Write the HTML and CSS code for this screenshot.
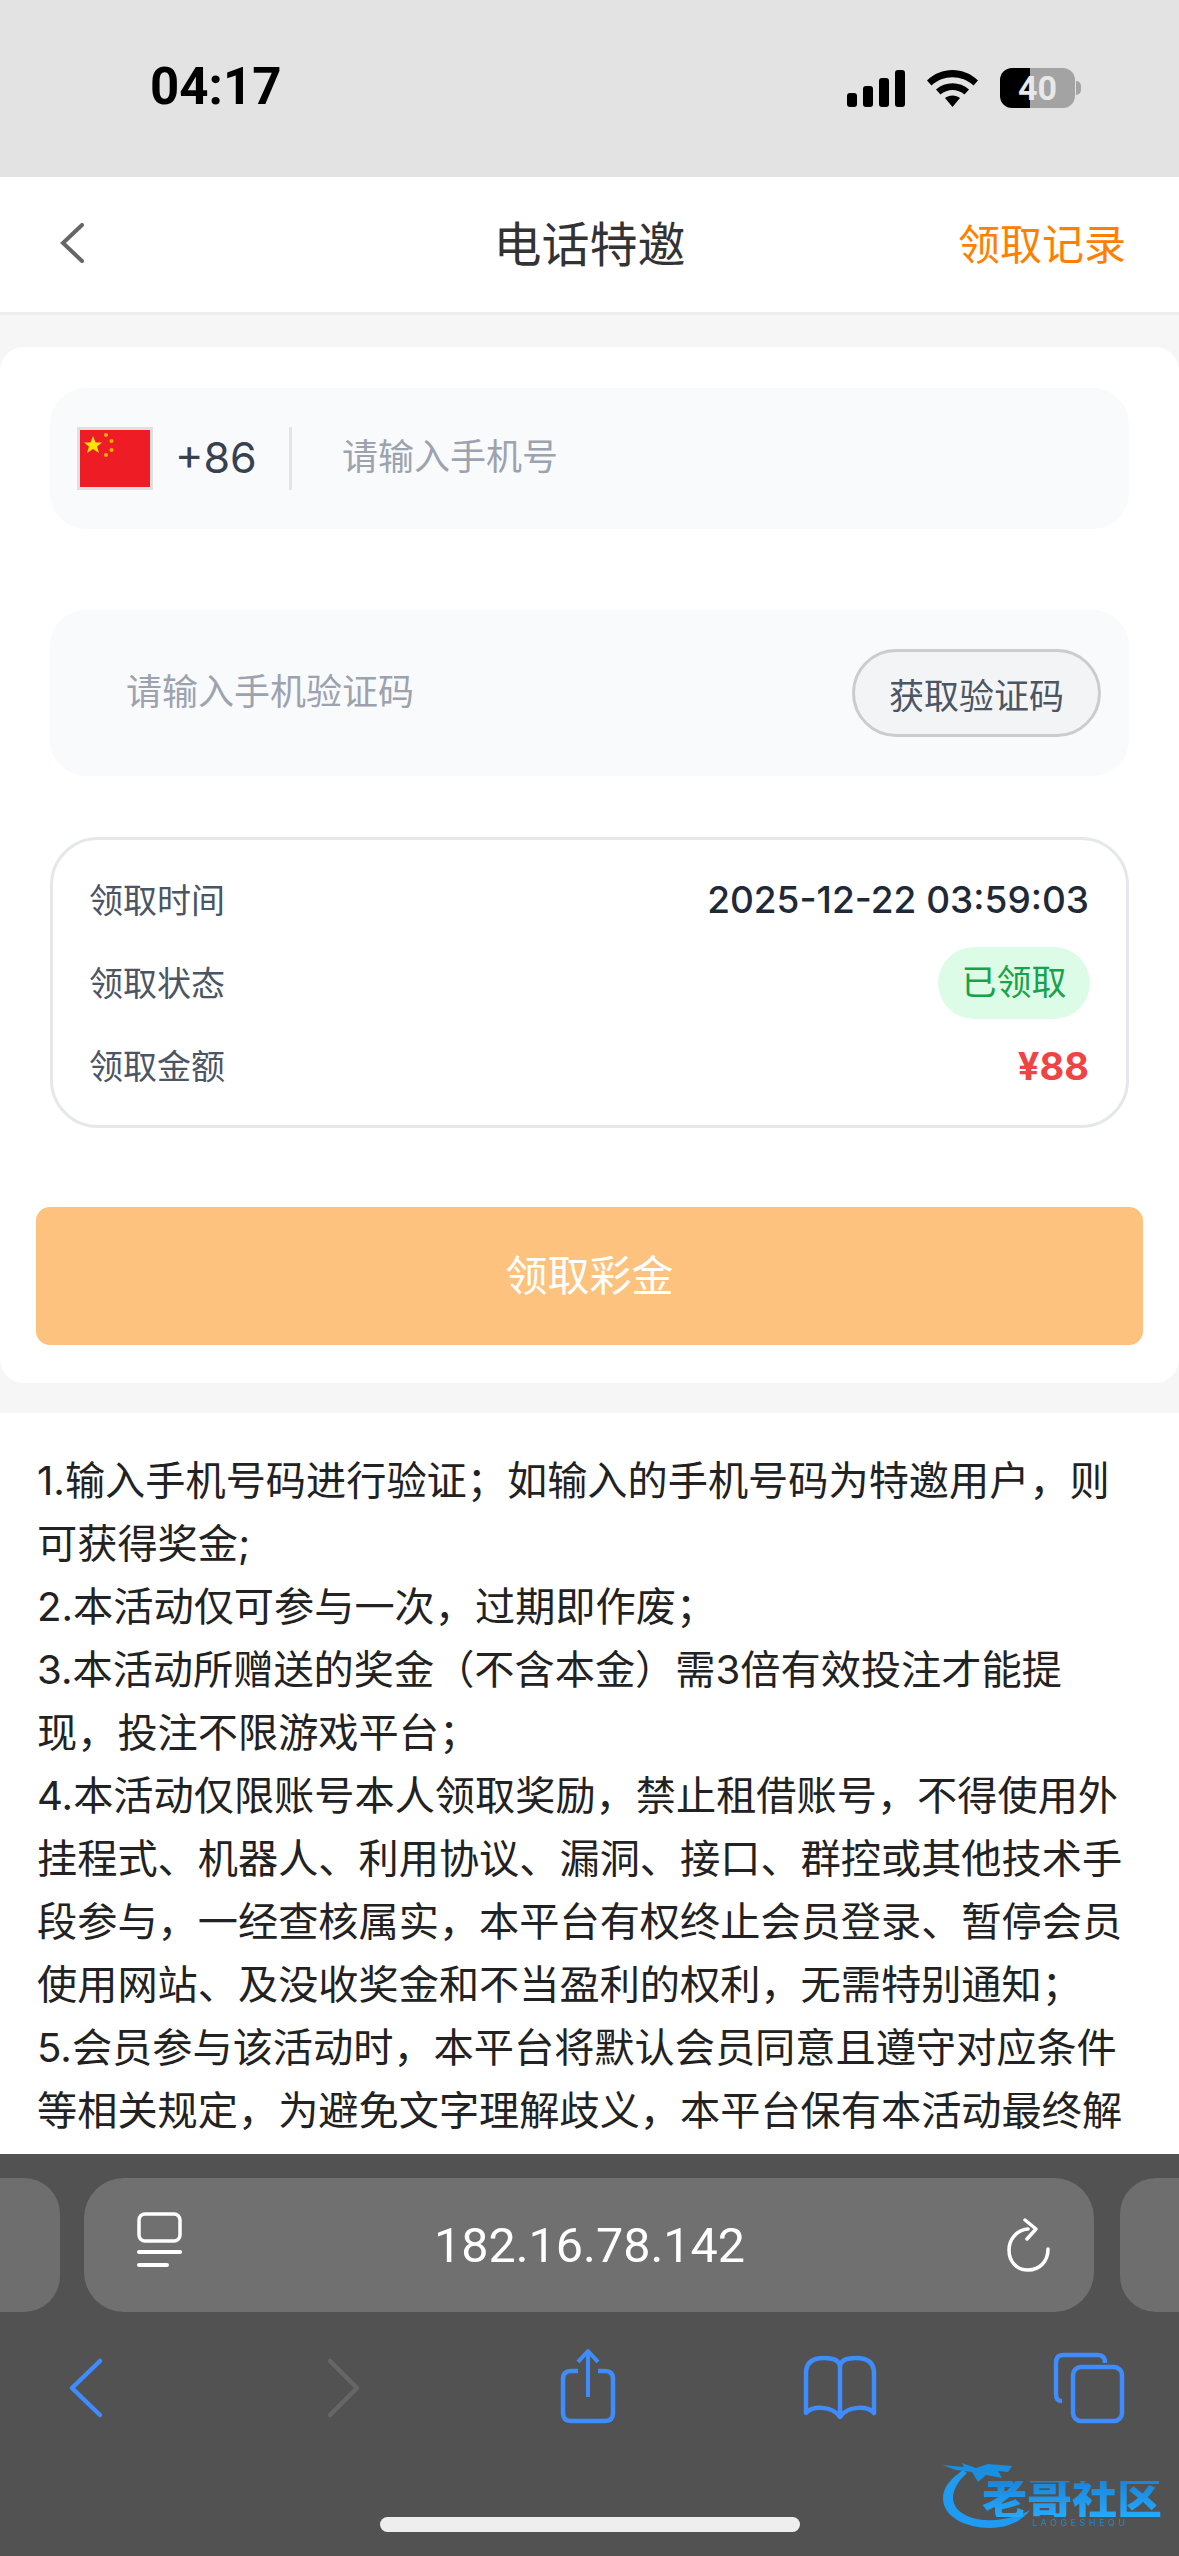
FILE: index.html
```html
<!DOCTYPE html>
<html lang="zh-CN">
<head>
    <meta charset="UTF-8">
    <meta name="viewport" content="width=device-width, initial-scale=1.0">
    <title>电话特邀</title>
    <link rel="stylesheet" href="styles.css">
</head>
<body>
    <div class="status-bar">
        <span class="time">04:17</span>
        <div class="status-icons">
            <svg width="58" height="37" viewBox="0 0 58 37"><rect x="0" y="23" width="10" height="14" rx="3"/><rect x="16" y="16" width="10" height="21" rx="3"/><rect x="32" y="8" width="10" height="29" rx="3"/><rect x="48" y="0" width="10" height="37" rx="3"/></svg>
            <svg width="51" height="37" viewBox="0 0 51 37"><path d="M0 10.5C14-3.5 37-3.5 51 10.5L46.5 15.5C35 4.5 16 4.5 4.5 15.5Z"/><path d="M9 19.5C18 11 33 11 42 19.5L37.5 24.5C30.5 18.5 20.5 18.5 13.5 24.5Z"/><path d="M18 28C22 24.5 29 24.5 33 28L25.5 37Z"/></svg>
            <div class="battery">40</div>
        </div>
    </div>

    <header class="nav">
        <svg class="nav-back" width="24" height="40" viewBox="0 0 24 40"><path d="M22 2L3 20L22 38" fill="none" stroke="#666" stroke-width="4" stroke-linecap="round"/></svg>
        <h1>电话特邀</h1>
        <a class="nav-link">领取记录</a>
    </header>

    <section class="card">
        <div class="field">
            <svg class="flag" width="76" height="63" viewBox="0 0 76 63">
                <rect width="76" height="63" fill="#dfe0e2"/>
                <rect x="3" y="3" width="70" height="57" fill="#ee1c25"/>
                <polygon points="16,9 18.5,15.5 25,15.5 20,19.5 22,26 16,22 10,26 12,19.5 7,15.5 13.5,15.5" fill="#ffe600"/>
                <circle cx="29" cy="8" r="2" fill="#ffb400"/>
                <circle cx="34.5" cy="14" r="2" fill="#ffb400"/>
                <circle cx="34.5" cy="23" r="2" fill="#ffb400"/>
                <circle cx="29" cy="28" r="2" fill="#ffb400"/>
            </svg>
            <span class="dial-code">+86</span>
            <input class="field-input" type="text" placeholder="请输入手机号">
        </div>

        <div class="field field-code">
            <input class="field-input" type="text" placeholder="请输入手机验证码">
            <button class="code-btn" type="button">获取验证码</button>
        </div>

        <div class="info">
            <div class="info-row">
                <span class="info-label">领取时间</span>
                <span class="info-date">2025-12-22 03:59:03</span>
            </div>
            <div class="info-row">
                <span class="info-label">领取状态</span>
                <span class="pill">已领取</span>
            </div>
            <div class="info-row">
                <span class="info-label">领取金额</span>
                <span class="amount">¥88</span>
            </div>
        </div>

        <button class="claim-btn" type="button">领取彩金</button>
    </section>

    <section class="rules">
        <p>1.输入手机号码进行验证；如输入的手机号码为特邀用户，则可获得奖金;</p>
        <p>2.本活动仅可参与一次，过期即作废；</p>
        <p>3.本活动所赠送的奖金（不含本金）需3倍有效投注才能提<br>现，投注不限游戏平台；</p>
        <p>4.本活动仅限账号本人领取奖励，禁止租借账号，不得使用外挂程式、机器人、利用协议、漏洞、接口、群控或其他技术手段参与，一经查核属实，本平台有权终止会员登录、暂停会员使用网站、及没收奖金和不当盈利的权利，无需特别通知；</p>
        <p>5.会员参与该活动时，本平台将默认会员同意且遵守对应条件等相关规定，为避免文字理解歧义，本平台保有本活动最终解</p>
    </section>

    <footer class="browser">
        <div class="url-row">
            <div class="tab-stub tab-stub-left"></div>
            <div class="url-bar">
                <svg width="45" height="66" viewBox="0 0 45 66"><rect x="2" y="2" width="41" height="27" rx="6" fill="none" stroke="#fff" stroke-width="3.5"/><rect x="0" y="38" width="45" height="4" rx="2" fill="#fff"/><rect x="0" y="51" width="32" height="4" rx="2" fill="#fff"/></svg>
                <span class="url-text">182.16.78.142</span>
                <svg width="43" height="54" viewBox="0 0 43 54"><path d="M21 11C9 12 2 22 2 32C2 44 10 52 21 52C33 52 41 43 41 31" fill="none" stroke="#fff" stroke-width="3.5" stroke-linecap="round"/><path d="M18 2L29 11L20 21" fill="none" stroke="#fff" stroke-width="3.5" stroke-linecap="round" stroke-linejoin="round"/></svg>
            </div>
            <div class="tab-stub tab-stub-right"></div>
        </div>

        <div class="toolbar">
            <svg width="100" height="80" viewBox="0 0 100 80"><path d="M64 16L36 43L64 70" fill="none" stroke="#3f8cff" stroke-width="4.5" stroke-linecap="round" stroke-linejoin="round"/></svg>
            <svg width="100" height="80" viewBox="0 0 100 80"><path d="M43 16L70 43L43 70" fill="none" stroke="#666" stroke-width="4.5" stroke-linecap="round" stroke-linejoin="round"/></svg>
            <svg width="100" height="80" viewBox="0 0 100 80"><path d="M41 26H34C28 26 26 29 26 34V68C26 73 28 76 34 76H68C74 76 76 73 76 68V34C76 29 74 26 68 26H61" fill="none" stroke="#3f8cff" stroke-width="4.5"/><path d="M51 52V7M41 17L51 6L61 17" fill="none" stroke="#3f8cff" stroke-width="4" stroke-linejoin="round"/></svg>
            <svg width="100" height="80" viewBox="0 0 100 80"><path d="M52 22C52 16 46 13 36 13C24 13 18 18 18 28V68C24 61 44 60 52 72C60 60 80 61 86 68V28C86 18 80 13 68 13C58 13 52 16 52 22ZM52 22V68" fill="none" stroke="#3f8cff" stroke-width="4.5" stroke-linejoin="round"/></svg>
            <svg width="100" height="80" viewBox="0 0 100 80"><path d="M24 56C19 56 18 53 18 49V18C18 13 20 10 25 10H60C65 10 67 13 67 18" fill="none" stroke="#3f8cff" stroke-width="4.5"/><rect x="35" y="22" width="49" height="54" rx="8" fill="none" stroke="#3f8cff" stroke-width="4.5"/></svg>
        </div>

        <div class="home-bar"></div>

        <div class="watermark">
            <svg width="110" height="76" viewBox="0 0 110 76"><path d="M21 15C8 24 1 33 1 43C1 62 24 73 48 73C66 73 80 66 88 55C76 62 58 66 41 65C24 63 11 55 11 43C11 34 17 25 25 18Z" fill="#1f9cf2"/><path d="M0 10L22 12L20 8L34 13L46 9L70 11L66 17L56 16L60 23L44 20L36 27L30 17L14 15Z" fill="#1a8fe0"/></svg>
            <span class="watermark-name">老哥社区</span>
            <span class="watermark-sub">LAOGESHEQU</span>
        </div>
    </footer>
</body>
</html>
```

FILE: styles.css
```css
* {
    box-sizing: border-box;
}

body {
    width: 1179px;
    height: 2556px;
    margin: 0;
    overflow: hidden;
    display: flex;
    flex-direction: column;
    background-color: #f6f6f7;
    font-family: Inter, "Noto Sans CJK SC", sans-serif;
    color: #222;
}

/* status bar */
.status-bar {
    height: 177px;
    flex-shrink: 0;
    display: flex;
    justify-content: space-between;
    align-items: flex-start;
    padding: 56px 104px 0 150px;
    background-color: #e3e3e3;
}

.time {
    font-family: Roboto, sans-serif;
    font-size: 51px;
    font-weight: 700;
    line-height: 62px;
    color: #000;
}

.status-icons {
    display: flex;
    align-items: center;
    gap: 22px;
    padding-top: 12px;
}

.battery {
    position: relative;
    width: 75px;
    height: 40px;
    border-radius: 12px;
    background: linear-gradient(90deg, #000 40%, #a3a3a3 40%);
    font-family: Roboto, sans-serif;
    font-size: 34px;
    font-weight: 700;
    line-height: 40px;
    text-align: center;
    color: #e8e8e8;
}

.battery::after {
    content: "";
    position: absolute;
    left: 76px;
    top: 13px;
    width: 5px;
    height: 14px;
    border-radius: 0 7px 7px 0;
    background-color: #a3a3a3;
}

/* nav */
.nav {
    height: 138px;
    flex-shrink: 0;
    display: grid;
    grid-template-columns: 1fr auto 1fr;
    align-items: center;
    padding: 0 53px 7px;
    background-color: #fff;
    border-bottom: 3px solid #eee;
}

.nav-back {
    margin: 3px 0 0 7px;
}

.nav h1 {
    margin: 0;
    font-size: 48px;
    font-weight: 400;
    color: #333;
}

.nav-link {
    justify-self: end;
    font-size: 42px;
    color: #ff8000;
}

/* main card */
.card {
    flex-shrink: 0;
    margin-top: 32px;
    padding: 41px 50px 38px;
    background-color: #fff;
    border-radius: 24px;
}

.field {
    height: 141px;
    display: flex;
    align-items: center;
    padding: 0 27px;
    background-color: #f9fafb;
    border-radius: 36px;
}

.flag {
    flex-shrink: 0;
}

.dial-code {
    width: 117px;
    height: 63px;
    flex-shrink: 0;
    margin-left: 22px;
    margin-right: 50px;
    border-right: 3px solid #e3e4e7;
    font-size: 43px;
    line-height: 60px;
    color: #374151;
}

.field-input {
    flex: 1;
    min-width: 0;
    margin-bottom: 3px;
    padding: 0;
    border: none;
    outline: none;
    background: transparent;
    font-family: inherit;
    font-size: 36px;
}

.field-input::placeholder {
    color: #9ca3af;
    opacity: 1;
}

.field-code {
    height: 166px;
    margin-top: 81px;
    padding: 0 28px 0 76px;
}

.code-btn {
    width: 249px;
    height: 88px;
    padding: 0;
    border: 3px solid #ccc;
    border-radius: 44px;
    background-color: #f3f4f6;
    font-family: inherit;
    font-size: 35px;
    color: #4b5563;
}

/* info box */
.info {
    margin-top: 61px;
    padding: 18px 37px 18px 36px;
    border: 3px solid #e5e7eb;
    border-radius: 48px;
}

.info-row {
    height: 83px;
    display: flex;
    justify-content: space-between;
    align-items: center;
}

.info-label {
    margin-bottom: 3px;
    font-size: 34px;
    color: #4b5563;
}

.info-date {
    font-size: 37px;
    font-weight: 500;
    color: #1f2937;
}

.pill {
    width: 152px;
    height: 72px;
    margin-right: -1px;
    border-radius: 36px;
    background-color: #dcfce7;
    font-size: 35px;
    line-height: 70px;
    text-align: center;
    color: #16a34a;
}

.amount {
    font-size: 38px;
    font-weight: 700;
    color: #ef4444;
}

.claim-btn {
    display: block;
    width: 1107px;
    height: 138px;
    margin: 79px -14px 0;
    padding: 0 0 7px;
    border: none;
    border-radius: 14px;
    background-color: #fec27f;
    font-family: inherit;
    font-size: 42px;
    color: #fff;
}

/* rules text */
.rules {
    flex: 1;
    min-height: 0;
    overflow: hidden;
    margin-top: 30px;
    padding: 36px 30px 0 37px;
    background-color: #fff;
    font-size: 40.2px;
    line-height: 63px;
}

.rules p {
    margin: 0;
}

/* safari chrome */
.browser {
    position: relative;
    height: 402px;
    flex-shrink: 0;
    padding-top: 24px;
    background-color: #525252;
}

.url-row {
    height: 134px;
    display: flex;
    gap: 24px;
}

.tab-stub {
    width: 60px;
    background-color: #6e6e6e;
}

.tab-stub-left {
    border-radius: 0 36px 36px 0;
}

.tab-stub-right {
    flex: 1;
    margin-left: 2px;
    border-radius: 36px 0 0 36px;
}

.url-bar {
    width: 1010px;
    display: flex;
    align-items: center;
    padding: 0 44px 0 53px;
    background-color: #707070;
    border-radius: 40px;
}

.url-text {
    flex: 1;
    padding-right: 10px;
    font-family: Roboto, sans-serif;
    font-size: 48.5px;
    text-align: center;
    color: #fff;
}

.toolbar {
    display: flex;
    justify-content: space-between;
    margin-top: 33px;
    padding: 0 41px 0 36px;
}

.home-bar {
    width: 420px;
    height: 15px;
    margin: 92px auto 0;
    border-radius: 8px;
    background-color: #eee;
}

.watermark {
    position: absolute;
    left: 942px;
    top: 301px;
    width: 222px;
    height: 76px;
    filter: blur(0.6px);
}

.watermark-name {
    position: absolute;
    left: 40px;
    top: 26px;
    font-size: 45px;
    font-weight: 900;
    line-height: 36px;
    white-space: nowrap;
    background: linear-gradient(180deg, #1b84d8, #24aaff);
    -webkit-background-clip: text;
    background-clip: text;
    color: transparent;
}

.watermark-sub {
    position: absolute;
    left: 90px;
    top: 63px;
    font-size: 9px;
    letter-spacing: 3.5px;
    line-height: 10px;
    color: #2088d0;
}
```
